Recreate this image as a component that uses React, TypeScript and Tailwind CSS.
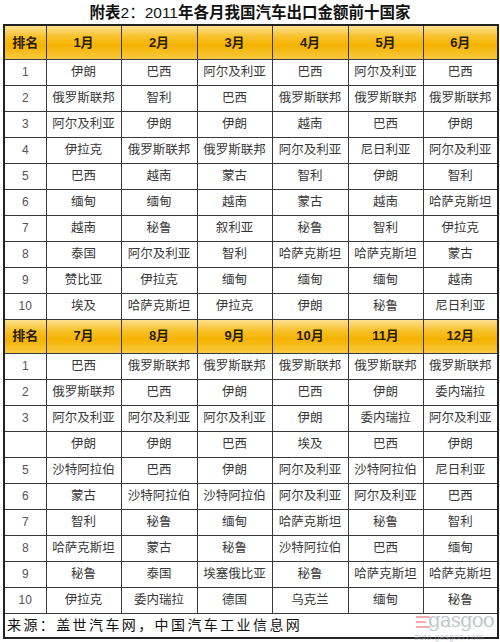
import React from "react";

const months1 = ["1月", "2月", "3月", "4月", "5月", "6月"];
const months2 = ["7月", "8月", "9月", "10月", "11月", "12月"];

const data1: string[][] = [
  ["伊朗", "巴西", "阿尔及利亚", "巴西", "阿尔及利亚", "巴西"],
  ["俄罗斯联邦", "智利", "巴西", "俄罗斯联邦", "俄罗斯联邦", "俄罗斯联邦"],
  ["阿尔及利亚", "伊朗", "伊朗", "越南", "巴西", "伊朗"],
  ["伊拉克", "俄罗斯联邦", "俄罗斯联邦", "阿尔及利亚", "尼日利亚", "阿尔及利亚"],
  ["巴西", "越南", "蒙古", "智利", "伊朗", "智利"],
  ["缅甸", "缅甸", "越南", "蒙古", "越南", "哈萨克斯坦"],
  ["越南", "秘鲁", "叙利亚", "秘鲁", "智利", "伊拉克"],
  ["泰国", "阿尔及利亚", "智利", "哈萨克斯坦", "哈萨克斯坦", "蒙古"],
  ["赞比亚", "伊拉克", "缅甸", "缅甸", "缅甸", "越南"],
  ["埃及", "哈萨克斯坦", "伊拉克", "伊朗", "秘鲁", "尼日利亚"],
];

const data2: string[][] = [
  ["巴西", "俄罗斯联邦", "俄罗斯联邦", "俄罗斯联邦", "俄罗斯联邦", "俄罗斯联邦"],
  ["俄罗斯联邦", "巴西", "伊朗", "巴西", "伊朗", "委内瑞拉"],
  ["阿尔及利亚", "阿尔及利亚", "阿尔及利亚", "伊朗", "委内瑞拉", "阿尔及利亚"],
  ["伊朗", "伊朗", "巴西", "埃及", "巴西", "伊朗"],
  ["沙特阿拉伯", "巴西", "伊朗", "阿尔及利亚", "沙特阿拉伯", "尼日利亚"],
  ["蒙古", "沙特阿拉伯", "沙特阿拉伯", "阿尔及利亚", "阿尔及利亚", "巴西"],
  ["智利", "秘鲁", "缅甸", "哈萨克斯坦", "秘鲁", "智利"],
  ["哈萨克斯坦", "蒙古", "秘鲁", "沙特阿拉伯", "巴西", "缅甸"],
  ["秘鲁", "泰国", "埃塞俄比亚", "秘鲁", "哈萨克斯坦", "哈萨克斯坦"],
  ["伊拉克", "委内瑞拉", "德国", "乌克兰", "缅甸", "秘鲁"],
];

const labels2 = ["1", "2", "3", "", "5", "6", "7", "8", "9", "10"];
const labels1 = ["1", "2", "3", "4", "5", "6", "7", "8", "9", "10"];

const cjk = "font-['Liberation_Sans','Noto_Sans_CJK_SC',sans-serif]";

function HeaderRow({ months }: { months: string[] }) {
  return (
    <tr className="h-[34px] bg-[linear-gradient(180deg,#fde49a_0%,#f8c12a_35%,#f5b200_60%,#f9c942_100%)]">
      <td className="border border-[#3a3a3a] text-center text-[13px] font-bold text-[#2a1e00]">排名</td>
      {months.map((m) => (
        <td key={m} className="border border-[#3a3a3a] text-center text-[13px] font-bold text-[#2a1e00]">
          {m}
        </td>
      ))}
    </tr>
  );
}

function BodyRows({ data, labels }: { data: string[][]; labels: string[] }) {
  return (
    <>
      {data.map((row, i) => (
        <tr key={i} className="h-[26px] bg-white">
          <td className="border border-[#3a3a3a] text-center text-[12px] text-[#555]">{labels[i]}</td>
          {row.map((c, j) => (
            <td key={j} className="border border-[#3a3a3a] text-center text-[12.5px] text-[#383838] whitespace-nowrap">
              {c}
            </td>
          ))}
        </tr>
      ))}
    </>
  );
}

export default function App() {
  return (
    <div className={`relative w-[500px] h-[642px] bg-white overflow-hidden ${cjk}`}>
      <div className="h-[24px] flex items-center justify-center text-[15.5px] text-[#111] leading-none pt-[1px]">
        <span className="font-bold">附表</span>
        <span>2：2011</span>
        <span className="font-bold">年各月我国汽车出口金额前十国家</span>
      </div>
      <table className="ml-[3px] w-[494px] border-collapse border-2 border-[#222] table-fixed">
        <colgroup>
          <col className="w-[42px]" />
          <col className="w-[75px]" />
          <col className="w-[76px]" />
          <col className="w-[75px]" />
          <col className="w-[76px]" />
          <col className="w-[75px]" />
          <col className="w-[75px]" />
        </colgroup>
        <tbody>
          <HeaderRow months={months1} />
          <BodyRows data={data1} labels={labels1} />
          <HeaderRow months={months2} />
          <BodyRows data={data2} labels={labels2} />
          <tr className="h-[25px] bg-white">
            <td colSpan={7} className="border border-[#222] text-left pl-[2px] text-[14px] tracking-[2.4px] text-[#111]">
              来源：盖世汽车网，中国汽车工业信息网
            </td>
          </tr>
        </tbody>
      </table>
      <div className="absolute right-[2px] bottom-[0px] w-[86px] h-[32px] pointer-events-none opacity-60">
        <div className="absolute left-[4px] top-[6px] flex flex-col gap-[3px]">
          <div className="w-[14px] h-[2px] bg-[#e77]" />
          <div className="w-[10px] h-[2px] bg-[#e77]" />
          <div className="w-[14px] h-[2px] bg-[#e77]" />
        </div>
        <div className="absolute left-[16px] top-[0px] text-[20px] leading-none text-[#9aa3ad] font-['DejaVu_Serif',serif] tracking-[-1px]">
          gasgoo
        </div>
        <div className="absolute left-[2px] top-[23px] text-[8.5px] leading-none text-[#aab] tracking-[0.3px]">
          auto.gasgoo.com
        </div>
      </div>
    </div>
  );
}
